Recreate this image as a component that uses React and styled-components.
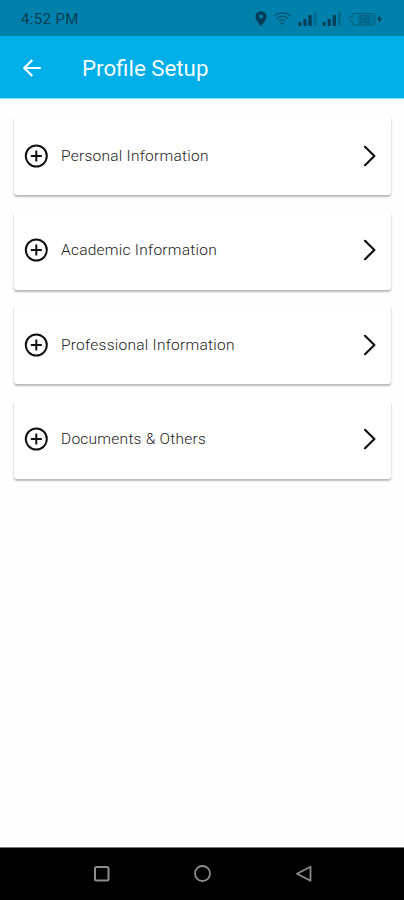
import React from 'react'
import styled, { createGlobalStyle } from 'styled-components';

const GlobalStyle = createGlobalStyle`
    * {
        box-sizing: border-box;
    }
    body {
        margin: 0;
        background: #fefefe;
        font-family: Roboto, sans-serif;
    }
`;

const Screen = styled.div`
    display: flex;
    flex-direction: column;
    height: 100vh;
    background: #fefefe;
`;

const StatusBar = styled.div`
    display: flex;
    align-items: center;
    justify-content: space-between;
    height: 36px;
    padding: 2px 21px 0 21px;
    background: #0081ac;
    color: #043e56;
`;

const Clock = styled.span`
    font-size: 15px;
    line-height: 18px;
    letter-spacing: 0.35px;
`;

const StatusIcons = styled.div`
    display: flex;
    align-items: center;
    height: 20px;

    svg {
        display: block;
    }
`;

const AppBar = styled.header`
    display: flex;
    align-items: center;
    height: 63px;
    padding: 1px 20px 0 20px;
    background: #00aee8;
    border-bottom: 1px solid #7fdcf8;
    color: #f6fdff;
`;

const BackButton = styled.button`
    display: flex;
    width: 62px;
    padding: 0;
    border: 0;
    background: none;
    color: inherit;
`;

const Title = styled.h1`
    margin: 0;
    font-size: 22.3px;
    font-weight: 400;
    line-height: 28px;
`;

const Content = styled.main`
    flex: 1;
    display: flex;
    flex-direction: column;
    gap: 15.5px;
    padding: 17px 13px 0 14px;
`;

const Card = styled.div`
    display: flex;
    align-items: center;
    height: 79px;
    padding: 0 13px 0 10px;
    border-radius: 3px;
    background: #fff;
    box-shadow: 0 2px 2px rgba(0, 0, 0, 0.24), 0 1px 3px rgba(0, 0, 0, 0.08);
    color: #111;
`;

const CardLabel = styled.span`
    flex: 1;
    margin-left: 13px;
    color: #222;
    font-size: 15.5px;
    font-weight: 300;
    line-height: 20px;
    letter-spacing: 0.25px;
`;

const NavBar = styled.nav`
    display: flex;
    align-items: center;
    justify-content: space-between;
    height: 53px;
    padding: 0 91px 0 93px;
    border-top: 1px solid #777;
    background: #000;
    color: #8c8c8c;
`;

const StatusGlyphs = () => (
    <svg width="128" height="20" viewBox="255 9 128 20" fill="currentColor">
        <path fillRule="evenodd" d="M261 11.2c-3.2 0-5.5 2.3-5.5 5.3 0 3.9 5.5 9.7 5.5 9.7s5.500-5.800 5.500-9.700c0-3-2.300-5.300-5.500-5.300zm0 3.400a2 2 0 1 1 0 4 2 2 0 0 1 0-4z" />
        <g fill="none" stroke="currentColor" strokeWidth="1.300" opacity="0.600">
            <path d="M274 16c5-4.300 11.500-4.300 16.500 0" />
            <path d="M276.500 18.700c3.500-3 8-3 11.500 0" />
            <path d="M279 21.300c2-1.700 4.500-1.700 6.500 0" />
        </g>
        <path d="M280 22.500h4.500l-2.250 2.700z" opacity="0.700" />
        {[298, 322.3].map(x => (
            <g key={x} transform={`translate(${x} 0)`}>
                <rect x="0.3" y="22" width="3" height="4" rx="1" />
                <rect x="5.300" y="19" width="3.200" height="7" rx="1" />
                <rect x="10.300" y="15" width="3.400" height="11" rx="1" />
                <rect x="15.800" y="12.300" width="2.700" height="13.700" rx="1" opacity="0.350" />
            </g>
        ))}
        <path d="M354.500 13.500h18.500q2 0 2 2v7.500q0 2-2 2h-18.500q-2 0-2-2v-1.300h-1.500q-1.500 0-1.500-2v-1.200q0-1.800 1.500-1.800h1.500v-1.200q0-2 2-2z" fill="none" stroke="currentColor" opacity="0.500" />
        <rect x="358" y="14.500" width="16" height="10" opacity="0.220" />
        <text x="359" y="23" fontSize="10" fontFamily="Roboto, sans-serif" opacity="0.400">58</text>
        <path d="M380 15l-3 4.800h2.200l-0.700 3.700 3.700-5h-2.400z" />
    </svg>
);

const BackArrow = () => (
    <svg width="24" height="24" viewBox="0 0 24 24" fill="none" stroke="currentColor" strokeWidth="2.200">
        <path d="M20.800 12H4.500M12.300 4l-8 8 8 8" />
    </svg>
);

const PlusCircle = () => (
    <svg width="24" height="24" viewBox="0 0 24 24" fill="none" stroke="currentColor" strokeWidth="2">
        <circle cx="12.300" cy="12" r="10.500" />
        <path d="M12.300 6.500v11M6.800 12h11" />
    </svg>
);

const Chevron = () => (
    <svg width="16" height="24" viewBox="0 0 16 24" fill="none" stroke="currentColor" strokeWidth="2.200" strokeLinecap="round" strokeLinejoin="round">
        <path d="M3 2.800L12.400 12 3 21.200" />
    </svg>
);

const sections = [
    'Personal Information',
    'Academic Information',
    'Professional Information',
    'Documents & Others',
];

const App = () => {
    return (
        <Screen>
            <GlobalStyle />
            <StatusBar>
                <Clock>4:52 PM</Clock>
                <StatusIcons>
                    <StatusGlyphs />
                </StatusIcons>
            </StatusBar>
            <AppBar>
                <BackButton aria-label="Back">
                    <BackArrow />
                </BackButton>
                <Title>Profile Setup</Title>
            </AppBar>
            <Content>
                {sections.map(item => (
                    <Card key={item}>
                        <PlusCircle />
                        <CardLabel>{item}</CardLabel>
                        <Chevron />
                    </Card>
                ))}
            </Content>
            <NavBar>
                <svg width="18" height="18" viewBox="0 0 18 18" fill="none" stroke="currentColor" strokeWidth="2">
                    <rect x="2" y="2" width="13.500" height="13.500" rx="1.500" />
                </svg>
                <svg width="18" height="18" viewBox="0 0 18 18" fill="none" stroke="currentColor" strokeWidth="1.800">
                    <circle cx="8.500" cy="8.500" r="7.500" />
                </svg>
                <svg width="18" height="18" viewBox="0 0 18 18" fill="none" stroke="currentColor" strokeWidth="1.800" strokeLinejoin="round">
                    <path d="M15.500 1.700v14L2 8.700z" />
                </svg>
            </NavBar>
        </Screen>
    )
};

export default App;
